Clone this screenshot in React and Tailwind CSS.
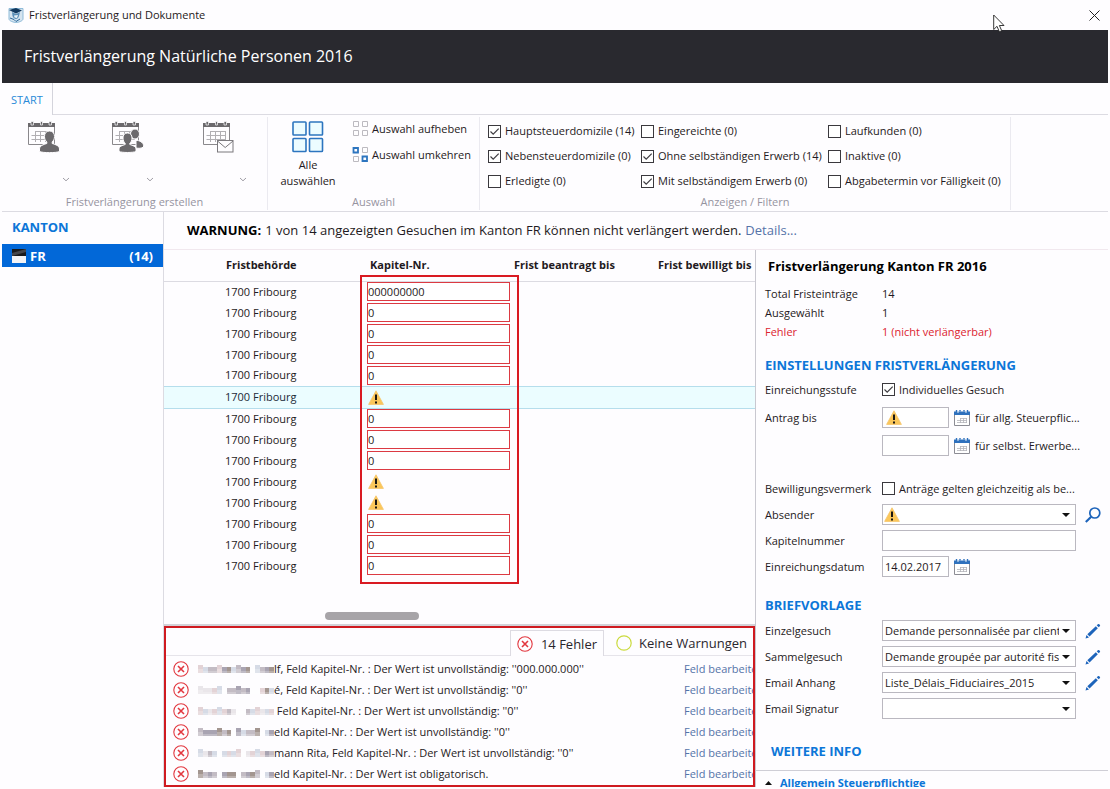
import React, { useState } from "react";

// filter check boxes of the ribbon, one list for each column
const filterColumns = [
  [
    { id: "haupt", label: "Hauptsteuerdomizile (14)", checked: true },
    { id: "neben", label: "Nebensteuerdomizile (0)", checked: true },
    { id: "erledigte", label: "Erledigte (0)", checked: false },
  ],
  [
    { id: "eingereichte", label: "Eingereichte (0)", checked: false },
    { id: "ohne", label: "Ohne selbständigen Erwerb (14)", checked: true },
    { id: "mit", label: "Mit selbständigem Erwerb (0)", checked: true },
  ],
  [
    { id: "laufkunden", label: "Laufkunden (0)", checked: false },
    { id: "inaktive", label: "Inaktive (0)", checked: false },
    { id: "abgabe", label: "Abgabetermin vor Fälligkeit (0)", checked: false },
  ],
];

// null = Kapitel-Nr. is missing, a warning sign is shown
const kapitel = ["000000000", "0", "0", "0", "0", null, "0", "0", "0", null, null, "0", "0", "0"];

const errors = [
  { rest: "lf, Feld Kapitel-Nr. : Der Wert ist unvollständig: ''000.000.000''", mask: "2344256345603456" },
  { rest: "é, Feld Kapitel-Nr. : Der Wert ist unvollständig: ''0''", mask: "1112304454500263" },
  { rest: "\u00a0Feld Kapitel-Nr. : Der Wert ist unvollständig: ''0''", mask: "2312324100432132" },
  { rest: "eld Kapitel-Nr. : Der Wert ist unvollständig: ''0''", mask: "4555646053446035" },
  { rest: "mann Rita, Feld Kapitel-Nr. : Der Wert ist unvollständig: ''0''", mask: "3143032320123254" },
  { rest: "eld Kapitel-Nr. : Der Wert ist obligatorisch.", mask: "6454056604564035" },
];

const maskColors = ["#fefdff", "#e9e6ea", "#e3d3d6", "#d6dbe6", "#c3bcc4", "#a9a4b2", "#a39690"];

function Masked({ mask }) {
  return (
    <svg width="76" height="10" viewBox="0 0 76 10" className="shrink-0" shapeRendering="crispEdges" aria-hidden="true">
      {mask.split("").map((c, i) => (
        <g key={i}>
          <rect x={i * 4.75} y={i % 4 === 0 ? 1 : 3} width="4.75" height="4" fill={maskColors[c]} />
          <rect x={i * 4.75} y="5" width="4.75" height="4" fill={maskColors[c]} opacity="0.75" />
        </g>
      ))}
    </svg>
  );
}

function WarnIcon({ className = "" }) {
  return (
    <svg width="16" height="15" viewBox="0 0 16 15" className={className} aria-hidden="true">
      <path d="M8 0.8 L15.4 14.4 H0.6 Z" fill="#fbc75a" stroke="#f5c468" strokeWidth="0.8" strokeLinejoin="round" />
      <path d="M7 4.5 h2 v5.6 h-2 z M7 11.4 h2 v2 h-2 z" fill="#1a1712" />
    </svg>
  );
}

function ErrorIcon() {
  return (
    <svg width="16" height="16" viewBox="0 0 16 16" fill="none" stroke="#e2373f" className="shrink-0" aria-hidden="true">
      <circle cx="8" cy="8" r="7.2" strokeWidth="1.1" />
      <path d="M5 5 L11 11 M11 5 L5 11" strokeWidth="1.6" />
    </svg>
  );
}

function CalendarIcon() {
  return (
    <svg width="16" height="16" viewBox="0 0 16 16" fill="none" aria-hidden="true">
      <path d="M0.5 4 V15.5 H15.5 V4" fill="#fff" stroke="#8c8c94" />
      <path d="M0 1.5 H16 V5 H0 Z" fill="#2f71bd" />
      <path d="M2.5 0 V2 M6 0 V1.5 M10 0 V1.5 M13.5 0 V2" stroke="#2f71bd" strokeWidth="1.4" />
      <path d="M4 1 V3 M12 1 V3" stroke="#dbe8f5" strokeWidth="1" />
      <path d="M6 8.5 H13 M3 10.5 H13 M3 12.5 H13 M6.5 8 V13 M9.5 8 V13 M12.5 8 V13" stroke="#b4b4ba" strokeWidth="0.8" />
    </svg>
  );
}

function PencilIcon() {
  return (
    <svg width="16" height="16" viewBox="0 0 16 16" fill="#1d64bb" aria-hidden="true">
      <path d="M0.5 15.5 L1.5 12 L4 14.5 Z" />
      <path d="M2.3 11.2 L10.8 3.2 L12.8 5.2 L4.6 13.6 Z" />
      <path d="M11.7 2.3 L13.2 1 C14 0.5 15.6 2 15 2.9 L13.7 4.3 Z" />
    </svg>
  );
}

function SearchIcon() {
  return (
    <svg width="16" height="16" viewBox="0 0 16 16" fill="none" stroke="#1d64bb" aria-hidden="true">
      <circle cx="9.8" cy="6" r="5" strokeWidth="1.7" />
      <path d="M6.2 9.8 L0.8 15" strokeWidth="2.2" />
    </svg>
  );
}

function ChevronDown() {
  return (
    <svg width="8" height="5" viewBox="0 0 8 5" fill="none" stroke="#a09ea6" aria-hidden="true">
      <path d="M1 1 L4 3.8 L7 1" />
    </svg>
  );
}

// calendar sheet of the three big ribbon buttons, children are drawn in front of it
function RibbonCalendar({ children }) {
  return (
    <svg width="32" height="32" viewBox="0 0 32 32" fill="none" aria-hidden="true">
      <path d="M0.5 6 V23.5 H26.5 V6" stroke="#8a888c" fill="#fefdff" />
      <path d="M0 2 H27 V6 H0 Z" fill="#6b696c" />
      <path d="M3 0.5 H5.500 V4 H3 Z M21 0.5 H23.500 V4 H21 Z M12.5 0.5 H14.500 V4 H12.5 Z" fill="#6b696c" stroke="#fefdff" strokeWidth="0.7" />
      <path d="M7 10.5 H23 M3.5 14.5 H23 M3.5 18.5 H23 M7.5 10 V21 M12.5 10 V21 M17.5 10 V21 M22.5 10 V19" stroke="#b1afb3" />
      {children}
    </svg>
  );
}

function PersonCalendar() {
  return (
    <RibbonCalendar>
      <path
        d="M21.500 10 c3.500 0 5 2.500 5 5.500 c0 2.500 -1 4.300 -2.300 5.400 v1.600 c3.500 1.200 7.300 2.200 7.300 5.500 v2.500 c-3 1.500 -17 1.500 -20 0 v-2.500 c0 -3.300 3.800 -4.300 7.300 -5.500 v-1.600 c-1.300 -1.100 -2.300 -2.900 -2.300 -5.400 c0 -3 1.500 -5.500 5 -5.500 z"
        fill="#6b696c"
        stroke="#fefdff"
      />
    </RibbonCalendar>
  );
}

function GroupCalendar() {
  return (
    <RibbonCalendar>
      <ellipse cx="23" cy="13" rx="4.500" ry="5" fill="#6b696c" stroke="#fefdff" />
      <path d="M24 19.500 C27 19 31.500 21.500 31.500 24.500 V26 C29.500 27.500 26.500 27.500 24 27 Z" fill="#6b696c" stroke="#fefdff" />
      <path
        d="M15.500 12 c3.200 0 4.500 2.300 4.500 5 c0 2.400 -0.900 4.200 -2.200 5.300 v1.200 c3 1 6.200 1.900 6.200 4.700 v2.300 c-3 1.300 -14 1.300 -17 0 v-2.300 c0 -2.800 3.200 -3.700 6.200 -4.700 v-1.200 c-1.300 -1.100 -2.200 -2.900 -2.200 -5.300 c0 -2.700 1.300 -5 4.500 -5 z"
        fill="#6b696c"
        stroke="#fefdff"
      />
    </RibbonCalendar>
  );
}

function MailCalendar() {
  return (
    <RibbonCalendar>
      <rect x="14.500" y="19.500" width="15.500" height="11.500" fill="#fefdff" stroke="#7b797d" />
      <path d="M14.500 20 L22.200 26.500 L30 20" stroke="#7b797d" />
    </RibbonCalendar>
  );
}

function Checkbox({ id, label, checked }) {
  return (
    <label htmlFor={id} className="flex items-center gap-1 whitespace-nowrap">
      <span className="grid size-[13px] shrink-0">
        <input
          id={id}
          type="checkbox"
          defaultChecked={checked}
          className="peer col-start-1 row-start-1 size-[13px] appearance-none border border-[#3a383d] bg-white"
        />
        <svg
          viewBox="0 0 13 13"
          fill="none"
          stroke="#3f3d42"
          className="pointer-events-none invisible col-start-1 row-start-1 size-[13px] peer-checked:visible"
        >
          <path d="M2.500 6.500 L5.200 9.200 L10.700 3.700" strokeWidth="1.200" />
        </svg>
      </span>
      {label}
    </label>
  );
}

function Select({ id, value = "", warn }) {
  return (
    <div className="relative">
      <select
        id={id}
        defaultValue={value}
        className="block h-[21px] w-full appearance-none overflow-hidden border border-[#bab8c0] bg-white pr-4 pl-0.5 text-clip whitespace-nowrap"
      >
        <option value={value}>{value}</option>
      </select>
      {warn && <WarnIcon className="pointer-events-none absolute top-[3px] left-0.5" />}
      <svg width="8" height="4" viewBox="0 0 8 4" className="pointer-events-none absolute top-[9px] right-1.5" aria-hidden="true">
        <path d="M0 0 H8 L4 4 Z" fill="#111" />
      </svg>
    </div>
  );
}

function FormRow({ id, label, action, children }) {
  return (
    <div className="grid min-h-[21px] grid-cols-[117px_1fr_32px] items-center">
      <label htmlFor={id}>{label}</label>
      {children}
      {action}
    </div>
  );
}

function IconButton({ label, children }) {
  return (
    <button type="button" aria-label={label} className="ml-[9px] flex size-4 items-center justify-center">
      {children}
    </button>
  );
}

function TitleBar() {
  return (
    <header>
      <div className="flex h-[30px] items-center gap-[5px] pr-1.5 pl-1.5 text-[11px]">
        <svg width="16" height="16" viewBox="0 0 16 16" aria-hidden="true">
          <path d="M1 1.500 H15 V12 C15 14 10 15.500 8 15.500 C6 15.500 1 14 1 12 Z" fill="#d5e4f0" stroke="#8fbbd9" />
          <path d="M1 3 L8 1 L14 3.500 L8 6.500 Z" fill="#12395f" />
          <path d="M4 5 L4.500 9 C6 13 10 13 11 9 L12 5 L8 7 Z" fill="#5b8fb8" />
          <path d="M6 8.500 L10 8 L9 11 L6.500 10.500 Z" fill="#e9f2f8" />
          <path d="M2 11 L6 12.500 L8 14.500 L12 12" stroke="#2b6799" fill="none" />
        </svg>
        <span className="flex-1">Fristverlängerung und Dokumente</span>
        <button type="button" aria-label="Schliessen" className="p-0.5">
          <svg width="11" height="11" viewBox="0 0 11 11" stroke="#222" aria-hidden="true">
            <path d="M0.500 0.500 L10.500 10.500 M10.500 0.500 L0.500 10.500" />
          </svg>
        </button>
      </div>
      <div className="flex h-[53px] items-center bg-[#29292f] pb-0.5 pl-[22px] text-white">
        <h1 className="text-[16px]">Fristverlängerung Natürliche Personen 2016</h1>
      </div>
      {/* mouse pointer */}
      <svg width="12" height="19" viewBox="0 0 12 19" className="absolute top-[14px] right-[105px]" aria-hidden="true">
        <path
          d="M0.700 1 V15.500 L4 12.300 L6.300 17.700 L8.700 16.700 L6.400 11.500 H11 Z"
          fill="#fff"
          stroke="#222"
          strokeWidth="0.900"
        />
      </svg>
    </header>
  );
}

function Ribbon() {
  return (
    <div className="border-b border-[#dcdbe2]">
      <div className="flex h-8">
        <button type="button" className="border-r border-[#d4d4dc] pt-0.5 pr-[9px] pl-[9px] text-[#2a8bd8]">
          START
        </button>
        <div className="flex-1 border-b border-[#dcdbe2]" />
      </div>

      <div className="flex h-24 pt-0.5 pb-px">
        <section className="flex w-[266px] flex-col border-r border-[#ebeaf0]">
          <div className="flex flex-1 pl-[26px]">
            <button type="button" aria-label="Einzelgesuch erstellen" className="flex w-[84px] flex-col pt-1">
              <PersonCalendar />
              <span className="mt-6 ml-[34px]">
                <ChevronDown />
              </span>
            </button>
            <button type="button" aria-label="Sammelgesuch erstellen" className="flex w-[91px] flex-col pt-1">
              <GroupCalendar />
              <span className="mt-6 ml-[34px]">
                <ChevronDown />
              </span>
            </button>
            <button type="button" aria-label="Email erstellen" className="flex flex-col pt-1">
              <MailCalendar />
              <span className="mt-6 ml-[36px]">
                <ChevronDown />
              </span>
            </button>
          </div>
          <h2 className="text-center text-[#96949f]">Fristverlängerung erstellen</h2>
        </section>

        <section className="flex w-[212px] flex-col border-r border-[#ebeaf0]">
          <div className="flex flex-1">
            <button type="button" className="flex w-20 flex-col items-center pt-1 leading-4">
              <svg width="32" height="32" viewBox="0 0 32 32" fill="#ecfcff" stroke="#2d75bf" strokeWidth="1.600" className="mb-1 shrink-0" aria-hidden="true">
                <rect x="1" y="1" width="13" height="13" rx="0.800" />
                <rect x="17.500" y="1" width="13" height="13" rx="0.800" />
                <rect x="1" y="17.500" width="13" height="13" rx="0.800" />
                <rect x="17.500" y="17.500" width="13" height="13" rx="0.800" />
              </svg>
              Alle
              <br />
              auswählen
            </button>
            <div className="flex flex-col gap-2.5 pt-1 pl-1">
              <button type="button" className="flex h-4 items-center gap-1 whitespace-nowrap">
                <svg width="16" height="16" viewBox="0 0 16 16" fill="none" stroke="#bcbac0" aria-hidden="true">
                  <path d="M1.500 0.500 h5 v5 h-5 z M10.500 0.500 h5 v5 h-5 z M1.500 9.500 h5 v5 h-5 z M10.500 9.500 h5 v5 h-5 z" />
                </svg>
                Auswahl aufheben
              </button>
              <button type="button" className="flex h-4 items-center gap-1 whitespace-nowrap">
                <svg width="16" height="16" viewBox="0 0 16 16" fill="none" stroke="#bcbac0" aria-hidden="true">
                  <path d="M10.500 0.500 h5 v5 h-5 z M1.500 9.500 h5 v5 h-5 z" />
                  <path d="M1.500 1 h4.500 v4.500 h-4.500 z M10.500 9.500 h4.500 v4.500 h-4.500 z" stroke="#2d75bf" strokeWidth="1.800" />
                </svg>
                Auswahl umkehren
              </button>
            </div>
          </div>
          <h2 className="text-center text-[#96949f]">Auswahl</h2>
        </section>

        <section className="flex w-[531px] flex-col border-r border-[#ebeaf0]">
          <div className="grid flex-1 grid-cols-[153px_187px_1fr] pt-1.5 pl-2">
            {filterColumns.map((column, i) => (
              <div key={i} className="flex flex-col gap-[9px]">
                {column.map((f) => (
                  <Checkbox key={f.id} {...f} />
                ))}
              </div>
            ))}
          </div>
          <h2 className="text-center text-[#96949f]">Anzeigen / Filtern</h2>
        </section>
      </div>
    </div>
  );
}

function Sidebar() {
  return (
    <nav className="w-[162px] shrink-0 border-r border-[#dcdbe2]">
      <h2 className="flex h-8 items-center pb-0.5 pl-[10px] text-[13px] font-bold text-[#0c76d8]">KANTON</h2>
      <a href="#fr" className="flex h-[23px] items-center gap-1 bg-[#0268d8] px-[10px] text-[13px] font-bold text-white">
        <svg width="14" height="14" viewBox="0 0 14 14" aria-hidden="true">
          <rect width="14" height="14" fill="#f4f4f6" />
          <path d="M0 0 H14 V7 H0 Z" fill="#1a1a1c" />
          <path d="M14 0 V3 L0 7 V4 Z" fill="#46464a" />
        </svg>
        <span className="flex-1">FR</span>
        <span>(14)</span>
      </a>
    </nav>
  );
}

function FristTable() {
  const [selected, setSelected] = useState(5);

  return (
    <div className="relative flex-1 overflow-hidden">
      <table className="w-full table-fixed text-left">
        <colgroup>
          <col className="w-14" />
          <col className="w-36" />
          <col className="w-36" />
          <col className="w-36" />
          <col />
        </colgroup>
        <thead>
          <tr className="h-[31px] border-b border-[#dcdbe2] whitespace-nowrap">
            <td />
            <th className="pl-1.5">Fristbehörde</th>
            <th className="pl-1.5">Kapitel-Nr.</th>
            <th className="pl-1.5">Frist beantragt bis</th>
            <th className="pl-1.5">Frist bewilligt bis</th>
          </tr>
        </thead>
        <tbody>
          {kapitel.map((nr, i) => (
            <tr
              key={i}
              onClick={() => setSelected(i)}
              className={
                i === selected
                  ? "h-[22px] border-y border-[#b5deec] bg-[#ebfdff] text-[#1b2a38]"
                  : "h-[21px]"
              }
            >
              <td />
              <td className="pl-[5px] leading-5">1700 Fribourg</td>
              <td className="pl-[3px]">
                {nr === null ? (
                  <WarnIcon className="ml-px" />
                ) : (
                  <input
                    type="text"
                    aria-label="Kapitel-Nr."
                    defaultValue={nr}
                    className="block h-[19px] w-[143px] border border-[#dc3a42] bg-white"
                  />
                )}
              </td>
              <td />
              <td />
            </tr>
          ))}
        </tbody>
      </table>
      {/* red frame around the Kapitel-Nr. column */}
      <div className="pointer-events-none absolute top-[25px] left-[196px] h-[309px] w-[159px] border-2 border-[#d91a22]" />
    </div>
  );
}

function ErrorPanel() {
  return (
    <section className="h-[161px] shrink-0 overflow-hidden border-2 border-[#cf1a20]">
      <div className="flex h-7 text-[13px] text-[#2a272d]">
        <div className="flex-1 border-b border-[#e6e4ea]" />
        <button type="button" className="mt-0.5 flex items-center gap-2 border border-b-0 border-[#dddbe2] px-1.5 whitespace-nowrap">
          <ErrorIcon />
          14 Fehler
        </button>
        <button type="button" className="flex items-center gap-[7px] border-b border-[#e6e4ea] pt-0.5 pr-1.5 pl-3 whitespace-nowrap">
          <svg width="16" height="16" viewBox="0 0 16 16" fill="none" stroke="#cbdb3e" aria-hidden="true">
            <circle cx="8" cy="8" r="7.200" strokeWidth="1.200" />
          </svg>
          Keine Warnungen
        </button>
      </div>
      <ul className="pt-0.5">
        {errors.map((e, i) => (
          <li key={i} className="flex h-[21px] items-center pl-[7px] whitespace-nowrap">
            <ErrorIcon />
            <span className="flex flex-1 items-center pl-[9px]">
              <Masked mask={e.mask} />
              {e.rest}
            </span>
            <a href="#feld" className="w-[69px] overflow-hidden text-[#5573a8]">
              Feld bearbeite
            </a>
          </li>
        ))}
      </ul>
    </section>
  );
}

function SettingsPanel() {
  return (
    <aside className="flex w-[353px] shrink-0 flex-col overflow-hidden border-l border-[#c9c8d0]">
      <div className="pl-[9px]">
        <h2 className="flex h-[34px] items-center pb-0.5 pl-[3px] text-[13px] font-bold text-black">
          Fristverlängerung Kanton FR 2016
        </h2>
        <dl className="grid grid-cols-[117px_1fr] leading-[19px]">
          <dt>Total Fristeinträge</dt>
          <dd>14</dd>
          <dt>Ausgewählt</dt>
          <dd>1</dd>
          <dt className="text-[#dc2430]">Fehler</dt>
          <dd className="text-[#dc2430]">1 (nicht verlängerbar)</dd>
        </dl>

        <h3 className="mt-3 flex h-6 items-center text-[13px] font-bold text-[#0c76d8]">EINSTELLUNGEN FRISTVERLÄNGERUNG</h3>
        <div className="mt-0.5 flex flex-col gap-[7px]">
          <FormRow label="Einreichungsstufe" id="stufe">
            <Checkbox id="stufe" label="Individuelles Gesuch" checked />
          </FormRow>
          <FormRow label="Antrag bis" id="antrag1">
            <div className="flex items-center gap-[5px] whitespace-nowrap">
              <div className="relative">
                <input id="antrag1" type="text" className="block h-[21px] w-[67px] border border-[#bab8c0] bg-white" />
                <WarnIcon className="pointer-events-none absolute top-[3px] left-1" />
              </div>
              <button type="button" aria-label="Datum wählen">
                <CalendarIcon />
              </button>
              <span>für allg. Steuerpflic...</span>
            </div>
          </FormRow>
          <FormRow id="antrag2">
            <div className="flex items-center gap-[5px] whitespace-nowrap">
              <input id="antrag2" type="text" aria-label="Antrag bis" className="block h-[21px] w-[67px] border border-[#bab8c0] bg-white" />
              <button type="button" aria-label="Datum wählen">
                <CalendarIcon />
              </button>
              <span>für selbst. Erwerbe...</span>
            </div>
          </FormRow>
        </div>

        <div className="mt-[22px] flex flex-col gap-[5px]">
          <FormRow label="Bewilligungsvermerk" id="vermerk">
            <Checkbox id="vermerk" label="Anträge gelten gleichzeitig als be..." />
          </FormRow>
          <FormRow
            label="Absender"
            id="absender"
            action={
              <IconButton label="Absender suchen">
                <SearchIcon />
              </IconButton>
            }
          >
            <Select id="absender" warn />
          </FormRow>
          <FormRow label="Kapitelnummer" id="kapitelnummer">
            <input id="kapitelnummer" type="text" className="block h-[21px] w-full border border-[#bab8c0] bg-white" />
          </FormRow>
          <FormRow label="Einreichungsdatum" id="datum">
            <div className="flex items-center gap-[5px]">
              <input
                id="datum"
                type="text"
                defaultValue="14.02.2017"
                className="block h-[21px] w-[67px] border border-[#bab8c0] bg-white pl-0.5"
              />
              <button type="button" aria-label="Datum wählen">
                <CalendarIcon />
              </button>
            </div>
          </FormRow>
        </div>

        <h3 className="mt-4 flex h-6 items-center text-[13px] font-bold text-[#0c76d8]">BRIEFVORLAGE</h3>
        <div className="mt-[3px] flex flex-col gap-[5px]">
          <FormRow
            label="Einzelgesuch"
            id="einzel"
            action={
              <IconButton label="Einzelgesuch bearbeiten">
                <PencilIcon />
              </IconButton>
            }
          >
            <Select id="einzel" value="Demande personnalisée par client" />
          </FormRow>
          <FormRow
            label="Sammelgesuch"
            id="sammel"
            action={
              <IconButton label="Sammelgesuch bearbeiten">
                <PencilIcon />
              </IconButton>
            }
          >
            <Select id="sammel" value="Demande groupée par autorité fis" />
          </FormRow>
          <FormRow
            label="Email Anhang"
            id="anhang"
            action={
              <IconButton label="Email Anhang bearbeiten">
                <PencilIcon />
              </IconButton>
            }
          >
            <Select id="anhang" value="Liste_Délais_Fiduciaires_2015" />
          </FormRow>
          <FormRow label="Email Signatur" id="signatur">
            <Select id="signatur" />
          </FormRow>
        </div>

        <h3 className="mt-5 flex h-6 items-center pl-1.5 text-[13px] font-bold text-[#0c76d8]">WEITERE INFO</h3>
      </div>
      <button
        type="button"
        className="mt-[7px] flex shrink-0 items-center gap-2 border-t border-[#cfced6] pt-1 pl-[9px] font-bold text-[#0c76d8]"
      >
        <svg width="7" height="4" viewBox="0 0 7 4" aria-hidden="true">
          <path d="M0 4 H7 L3.500 0 Z" fill="#111" />
        </svg>
        Allgemein Steuerpflichtige
      </button>
    </aside>
  );
}

function App() {
  return (
    <div className="relative flex h-screen flex-col overflow-hidden bg-[#fefdff] px-0.5 pb-0.5 font-['Open_Sans','Noto_Sans',sans-serif] text-[11px] leading-4 text-[#1f1a22]">
      <TitleBar />
      <Ribbon />
      <div className="flex min-h-0 flex-1">
        <Sidebar />
        <div className="flex min-w-0 flex-1 flex-col">
          <p className="flex h-[38px] shrink-0 items-center gap-1 border-b border-[#f1e8ee] pb-0.5 pl-[23px] text-[13px] whitespace-nowrap">
            <strong className="text-black">WARNUNG:</strong>
            <span>1 von 14 angezeigten Gesuchen im Kanton FR können nicht verlängert werden.</span>
            <a href="#details" className="text-[#5573a8]">
              Details...
            </a>
          </p>
          <div className="flex min-h-0 flex-1">
            <main className="flex min-w-0 flex-1 flex-col">
              <FristTable />
              <div className="flex h-3.5 shrink-0 border-b-2 border-[#d3d2d8] pl-[161px]">
                <div className="h-2 w-[94px] rounded-full bg-[#a7a4a8]" />
              </div>
              <ErrorPanel />
            </main>
            <SettingsPanel />
          </div>
        </div>
      </div>
    </div>
  );
}

export default App;
